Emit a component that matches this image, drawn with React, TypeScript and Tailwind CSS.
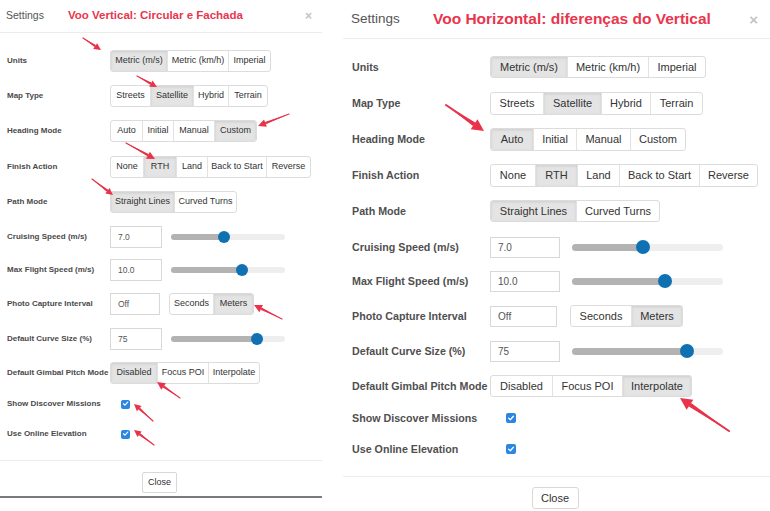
import React from 'react';

type GroupProps = {
  items: string[];
  active: number;
  widths: string[];
  cls: string;
};

function Group({ items, active, widths, cls }: GroupProps) {
  return (
    <div className={`flex border border-[#dcdcdc] rounded-[3px] overflow-hidden bg-white text-[#333] ${cls}`}>
      {items.map((t, i) => (
        <div
          key={t}
          className={`flex items-center justify-center whitespace-nowrap ${widths[i]} ${i > 0 ? 'border-l border-[#e2e2e2]' : ''} ${
            i === active ? 'bg-[#e4e4e4] shadow-[inset_0_1px_3px_rgba(0,0,0,0.10)]' : ''
          }`}
        >
          {t}
        </div>
      ))}
    </div>
  );
}

function Check({ cls }: { cls: string }) {
  return (
    <div className={`flex items-center justify-center rounded-[2px] bg-[#2b86e2] ${cls}`}>
      <svg viewBox="0 0 10 10" className="w-[80%] h-[80%]">
        <path d="M2 5.2 L4.1 7.2 L8 2.8" fill="none" stroke="white" strokeWidth="1.6" strokeLinecap="round" strokeLinejoin="round" />
      </svg>
    </div>
  );
}

function Slider({ pos, big }: { pos: number; big: boolean }) {
  const d = big ? 14 : 12;
  return (
    <div className={`relative rounded-full bg-[#eeeeee] ${big ? 'ml-[12px] w-[151px] h-[7px]' : 'ml-[9px] w-[114px] h-[6px]'}`}>
      <div className="absolute left-0 top-0 h-full rounded-full bg-[#b3b3b3]" style={{ width: pos }} />
      <div
        className="absolute rounded-full bg-[#0f71b2]"
        style={{ width: d, height: d, left: pos - d / 2, top: '50%', marginTop: -d / 2 }}
      />
    </div>
  );
}

function Arrow({ x1, y1, x2, y2, w = 2, head = 8, hw = 4 }: { x1: number; y1: number; x2: number; y2: number; w?: number; head?: number; hw?: number }) {
  const dx = x2 - x1;
  const dy = y2 - y1;
  const L = Math.hypot(dx, dy);
  const ux = dx / L;
  const uy = dy / L;
  const bx = x2 - ux * head;
  const by = y2 - uy * head;
  const px = -uy;
  const py = ux;
  return (
    <g>
      <polygon
        points={`${x1},${y1} ${bx + px * w * 0.6},${by + py * w * 0.6} ${bx - px * w * 0.6},${by - py * w * 0.6}`}
        fill="#e8334a"
      />
      <line x1={x1} y1={y1} x2={bx} y2={by} stroke="#e8334a" strokeWidth={w * 0.6} strokeLinecap="round" />
      <polygon points={`${x2},${y2} ${bx + px * hw},${by + py * hw} ${bx - px * hw},${by - py * hw}`} fill="#e8334a" />
    </g>
  );
}

function LRow({ label, cls, children }: { label: string; cls: string; children: React.ReactNode }) {
  return (
    <div className={`flex items-center h-[22px] ${cls}`}>
      <div className="w-[110px] pl-[7px] text-[8px] font-bold text-[#4a4a4a] whitespace-nowrap">{label}</div>
      {children}
    </div>
  );
}

function RRow({ label, cls, children }: { label: string; cls: string; children: React.ReactNode }) {
  return (
    <div className={`flex items-center h-[22px] ${cls}`}>
      <div className="w-[147px] pl-[9px] text-[10.7px] font-bold text-[#4f4f4f] whitespace-nowrap">{label}</div>
      {children}
    </div>
  );
}

function LeftPanel() {
  const inp = 'h-[22px] border border-[#d8d8d8] flex items-center pl-[7px] text-[8.5px] text-[#555]';
  return (
    <div className="w-[322px] flex flex-col text-[9px]">
      <div className="h-[33px] border-b border-[#ececec] flex items-center pl-[6px] pr-[10px]">
        <span className="w-[62px] text-[10.5px] text-[#555]">Settings</span>
        <span className="text-[11.5px] font-bold text-[#e8364e] whitespace-nowrap">Voo Vertical: Circular e Fachada</span>
        <span className="ml-auto text-[12px] font-bold text-[#c4c4c4] leading-none">×</span>
      </div>
      <LRow label="Units" cls="mt-[17px]">
        <Group items={['Metric (m/s)', 'Metric (km/h)', 'Imperial']} active={0} widths={['w-[56px]', 'w-[61px]', 'w-[42px]']} cls="h-[22px]" />
      </LRow>
      <LRow label="Map Type" cls="mt-[13px]">
        <Group items={['Streets', 'Satellite', 'Hybrid', 'Terrain']} active={1} widths={['w-[39px]', 'w-[43px]', 'w-[35px]', 'w-[39px]']} cls="h-[22px]" />
      </LRow>
      <LRow label="Heading Mode" cls="mt-[13px]">
        <Group items={['Auto', 'Initial', 'Manual', 'Custom']} active={3} widths={['w-[31px]', 'w-[31px]', 'w-[41px]', 'w-[42px]']} cls="h-[22px]" />
      </LRow>
      <LRow label="Finish Action" cls="mt-[14px]">
        <Group items={['None', 'RTH', 'Land', 'Back to Start', 'Reverse']} active={1} widths={['w-[32px]', 'w-[33px]', 'w-[31px]', 'w-[59px]', 'w-[44px]']} cls="h-[22px]" />
      </LRow>
      <LRow label="Path Mode" cls="mt-[13px]">
        <Group items={['Straight Lines', 'Curved Turns']} active={0} widths={['w-[63px]', 'w-[62px]']} cls="h-[22px]" />
      </LRow>
      <LRow label="Cruising Speed (m/s)" cls="mt-[13px]">
        <div className={`${inp} w-[52px]`}>7.0</div>
        <Slider pos={53} big={false} />
      </LRow>
      <LRow label="Max Flight Speed (m/s)" cls="mt-[11px]">
        <div className={`${inp} w-[52px]`}>10.0</div>
        <Slider pos={71} big={false} />
      </LRow>
      <LRow label="Photo Capture Interval" cls="mt-[12px]">
        <div className={`${inp} w-[50px]`}>Off</div>
        <Group items={['Seconds', 'Meters']} active={1} widths={['w-[43px]', 'w-[40px]']} cls="h-[22px] ml-[9px]" />
      </LRow>
      <LRow label="Default Curve Size (%)" cls="mt-[13px]">
        <div className={`${inp} w-[52px]`}>75</div>
        <Slider pos={86} big={false} />
      </LRow>
      <LRow label="Default Gimbal Pitch Mode" cls="mt-[12px]">
        <Group items={['Disabled', 'Focus POI', 'Interpolate']} active={0} widths={['w-[46px]', 'w-[51px]', 'w-[51px]']} cls="h-[22px]" />
      </LRow>
      <LRow label="Show Discover Missions" cls="mt-[9px]">
        <Check cls="ml-[11px] w-[9px] h-[9px]" />
      </LRow>
      <LRow label="Use Online Elevation" cls="mt-[8px]">
        <Check cls="ml-[11px] w-[9px] h-[9px]" />
      </LRow>
      <div className="mt-[15px] border-t border-[#ececec] pt-[11px] pb-[3px] border-b-2 border-b-[#7a7a7a] flex justify-center">
        <div className="ml-[-3px] w-[35px] h-[21px] border border-[#d8d8d8] rounded-[2px] flex items-center justify-center text-[9px] text-[#333]">
          Close
        </div>
      </div>
    </div>
  );
}

function RightPanel() {
  const inp = 'h-[21px] border border-[#d8d8d8] flex items-center pl-[7px] text-[10px] text-[#555]';
  return (
    <div className="ml-[21px] w-[427px] flex flex-col text-[11px]">
      <div className="h-[39px] border-b border-[#ececec] flex items-center pl-[8px] pr-[12px]">
        <span className="w-[82px] text-[13.5px] text-[#555]">Settings</span>
        <span className="text-[15.5px] font-bold text-[#e8364e] whitespace-nowrap">Voo Horizontal: diferenças do Vertical</span>
        <span className="ml-auto text-[15px] font-bold text-[#c4c4c4] leading-none">×</span>
      </div>
      <RRow label="Units" cls="mt-[17px]">
        <Group items={['Metric (m/s)', 'Metric (km/h)', 'Imperial']} active={0} widths={['w-[76px]', 'w-[81px]', 'w-[57px]']} cls="h-[22px]" />
      </RRow>
      <RRow label="Map Type" cls="mt-[14px]">
        <Group items={['Streets', 'Satellite', 'Hybrid', 'Terrain']} active={1} widths={['w-[52px]', 'w-[58px]', 'w-[49px]', 'w-[52px]']} cls="h-[23px]" />
      </RRow>
      <RRow label="Heading Mode" cls="mt-[14px]">
        <Group items={['Auto', 'Initial', 'Manual', 'Custom']} active={0} widths={['w-[42px]', 'w-[43px]', 'w-[54px]', 'w-[55px]']} cls="h-[23px]" />
      </RRow>
      <RRow label="Finish Action" cls="mt-[14px]">
        <Group items={['None', 'RTH', 'Land', 'Back to Start', 'Reverse']} active={1} widths={['w-[44px]', 'w-[42px]', 'w-[42px]', 'w-[80px]', 'w-[58px]']} cls="h-[23px]" />
      </RRow>
      <RRow label="Path Mode" cls="mt-[14px]">
        <Group items={['Straight Lines', 'Curved Turns']} active={0} widths={['w-[85px]', 'w-[83px]']} cls="h-[22px]" />
      </RRow>
      <RRow label="Cruising Speed (m/s)" cls="mt-[14px]">
        <div className={`${inp} w-[70px]`}>7.0</div>
        <Slider pos={71} big={true} />
      </RRow>
      <RRow label="Max Flight Speed (m/s)" cls="mt-[12px]">
        <div className={`${inp} w-[70px]`}>10.0</div>
        <Slider pos={93} big={true} />
      </RRow>
      <RRow label="Photo Capture Interval" cls="mt-[13px]">
        <div className={`${inp} w-[67px]`}>Off</div>
        <Group items={['Seconds', 'Meters']} active={1} widths={['w-[60px]', 'w-[51px]']} cls="h-[22px] ml-[13px]" />
      </RRow>
      <RRow label="Default Curve Size (%)" cls="mt-[13px]">
        <div className={`${inp} w-[70px]`}>75</div>
        <Slider pos={115} big={true} />
      </RRow>
      <RRow label="Default Gimbal Pitch Mode" cls="mt-[13px]">
        <Group items={['Disabled', 'Focus POI', 'Interpolate']} active={2} widths={['w-[61px]', 'w-[70px]', 'w-[69px]']} cls="h-[22px]" />
      </RRow>
      <RRow label="Show Discover Missions" cls="mt-[10px]">
        <Check cls="ml-[16px] w-[10px] h-[10px]" />
      </RRow>
      <RRow label="Use Online Elevation" cls="mt-[9px]">
        <Check cls="ml-[16px] w-[10px] h-[10px]" />
      </RRow>
      <div className="mt-[16px] border-t border-[#ececec] pt-[10px] flex justify-center">
        <div className="ml-[-3px] w-[47px] h-[22px] border border-[#d8d8d8] rounded-[3px] flex items-center justify-center text-[11px] text-[#333]">
          Close
        </div>
      </div>
    </div>
  );
}

export default function App() {
  return (
    <div className="relative w-[770px] h-[511px] overflow-hidden bg-white flex font-['Liberation_Sans',Arial,sans-serif]">
      <LeftPanel />
      <RightPanel />
      <svg className="absolute left-0 top-0 pointer-events-none" width={770} height={511}>
        <Arrow x1={83} y1={38} x2={101} y2={50} w={2} head={7} hw={3.5} />
        <Arrow x1={137} y1={76} x2={157} y2={87} w={2} head={7} hw={3.5} />
        <Arrow x1={289} y1={114} x2={258} y2={126} w={2} head={8} hw={4} />
        <Arrow x1={126} y1={143} x2={155} y2={159} w={2} head={8} hw={4} />
        <Arrow x1={92} y1={179} x2={113} y2={195} w={2} head={7} hw={3.5} />
        <Arrow x1={282} y1={319} x2={254} y2={305} w={2} head={8} hw={4} />
        <Arrow x1={180} y1={398} x2={157} y2={382} w={2} head={8} hw={4} />
        <Arrow x1={153} y1={421} x2={134} y2={404} w={2} head={7} hw={3.5} />
        <Arrow x1={154} y1={445} x2={134} y2={430} w={2} head={7} hw={3.5} />
        <Arrow x1={446} y1={105} x2={484} y2={131} w={3.5} head={12} hw={6} />
        <Arrow x1={729} y1={431} x2={680} y2={398} w={3.5} head={12} hw={6} />
      </svg>
    </div>
  );
}
